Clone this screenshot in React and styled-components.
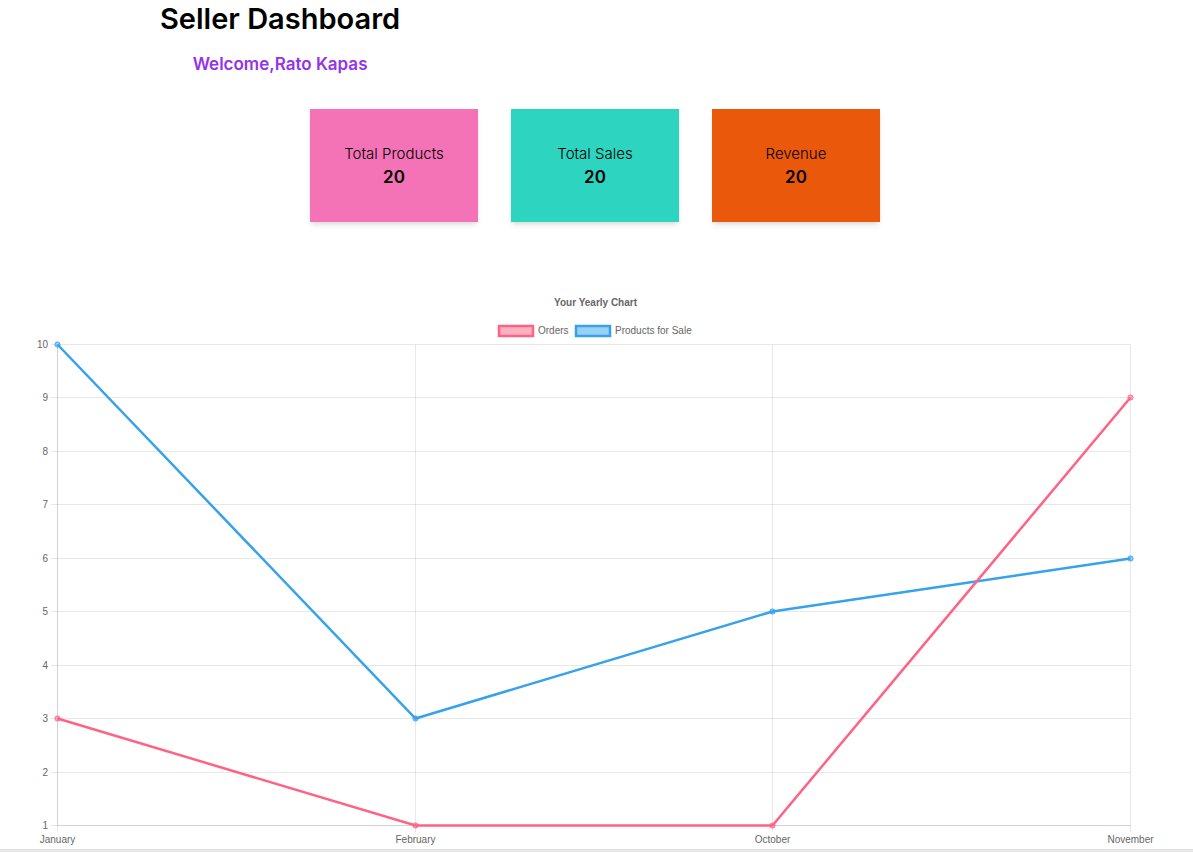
import React from 'react';
import styled, { createGlobalStyle } from 'styled-components';

const GlobalStyle = createGlobalStyle`
  *, *::before, *::after { box-sizing: border-box; }
  body {
    margin: 0;
    background: #fff;
    color: #000;
    font-family: Inter, "Liberation Sans", sans-serif;
  }
`;

const Page = styled.main`
  display: flex;
  flex-direction: column;
`;

const Header = styled.header`
  align-self: flex-start;
  display: flex;
  flex-direction: column;
  gap: 14px;
  margin-left: 160px;
  text-align: center;
`;

const Title = styled.h1`
  margin: 0;
  font-size: 29px;
  font-weight: 600;
  line-height: 38px;
`;

const Welcome = styled.h2`
  margin: 0;
  color: #9333ea;
  font-size: 17px;
  font-weight: 600;
  line-height: 24px;
`;

const Stats = styled.section`
  display: flex;
  flex-wrap: wrap;
  justify-content: center;
  gap: 33px;
  padding: 33px 3px 68px 0;
`;

const StatCard = styled.article`
  display: flex;
  flex-direction: column;
  align-items: center;
  width: 168px;
  padding: 33px 16px;
  background: ${({ $color }) => $color};
  box-shadow: 0 4px 6px -1px rgba(0, 0, 0, 0.1), 0 2px 4px -2px rgba(0, 0, 0, 0.1);
`;

const StatLabel = styled.span`
  font-size: 15px;
  font-weight: 300;
  line-height: 23px;
`;

const StatValue = styled.strong`
  font-size: 17px;
  font-weight: 600;
  line-height: 24px;
`;

const Chart = styled.svg`
  display: block;
  width: 100%;
  height: auto;
  font-family: "Liberation Sans", Arial, sans-serif;
  font-size: 10px;
  fill: #666;
`;

const Footer = styled.footer`
  height: 3px;
  background: #e8e8e8;
  border-top: 1px solid #e0e0e0;
`;

const stats = [
  { label: 'Total Products', value: 20, color: '#f472b6' },
  { label: 'Total Sales', value: 20, color: '#2dd4bf' },
  { label: 'Revenue', value: 20, color: '#ea580c' },
];

const months = ['January', 'February', 'October', 'November'];
const ticks = [1, 2, 3, 4, 5, 6, 7, 8, 9, 10];
const series = [
  { name: 'Products for Sale', values: [10, 3, 5, 6], stroke: '#36a2eb', fill: 'rgba(54, 162, 235, 0.5)', legendX: 576 },
  { name: 'Orders', values: [3, 1, 1, 9], stroke: '#ff6384', fill: 'rgba(255, 99, 132, 0.5)', legendX: 499 },
];

const plot = { left: 57.5, right: 1130.5, top: 54.5, bottom: 535.5 };
const xAt = (i) => Math.round(plot.left + (i * (plot.right - plot.left)) / 3 - 0.5) + 0.5;
const yAt = (v) => Math.round(plot.bottom - ((v - 1) * (plot.bottom - plot.top)) / 9 - 0.5) + 0.5;

function YearlyChart() {
  return (
    <Chart viewBox="0 0 1193 559" role="img" aria-label="Your Yearly Chart">
      <text x="595.5" y="16" textAnchor="middle" fontWeight="700">Your Yearly Chart</text>
      {series.map((s) => (
        <g key={s.name}>
          <rect x={s.legendX} y="36" width="34" height="10" fill={s.fill} stroke={s.stroke} strokeWidth="2.5" />
          <text x={s.legendX + 39} y="44">{s.name}</text>
        </g>
      ))}
      {ticks.map((t) => (
        <g key={t}>
          <line x1="51" x2={plot.right} y1={yAt(t)} y2={yAt(t)} stroke="#000" strokeOpacity="0.09" />
          <text x="48" y={yAt(t) + 3} textAnchor="end">{t}</text>
        </g>
      ))}
      {months.map((m, i) => (
        <g key={m}>
          <line x1={xAt(i)} x2={xAt(i)} y1={plot.top} y2="542" stroke="#000" strokeOpacity="0.09" />
          <text x={xAt(i)} y="553" textAnchor="middle">{m}</text>
        </g>
      ))}
      <path d={`M${plot.left} ${plot.top}V${plot.bottom}H${plot.right}`} fill="none" stroke="#000" strokeOpacity="0.09" />
      {series.map((s) => (
        <g key={s.name} stroke={s.stroke}>
          <polyline points={s.values.map((v, i) => `${xAt(i)},${yAt(v)}`).join(' ')} fill="none" strokeWidth="2.5" />
          {s.values.map((v, i) => (
            <circle key={months[i]} cx={xAt(i)} cy={yAt(v)} r="2.6" fill={s.fill} strokeWidth="0.9" />
          ))}
        </g>
      ))}
    </Chart>
  );
}

export default function App() {
  return (
    <>
      <GlobalStyle />
      <Page>
        <Header>
          <Title>Seller Dashboard</Title>
          <Welcome>Welcome,Rato Kapas</Welcome>
        </Header>
        <Stats>
          {stats.map((s) => (
            <StatCard key={s.label} $color={s.color}>
              <StatLabel>{s.label}</StatLabel>
              <StatValue>{s.value}</StatValue>
            </StatCard>
          ))}
        </Stats>
        <YearlyChart />
        <Footer />
      </Page>
    </>
  );
}
